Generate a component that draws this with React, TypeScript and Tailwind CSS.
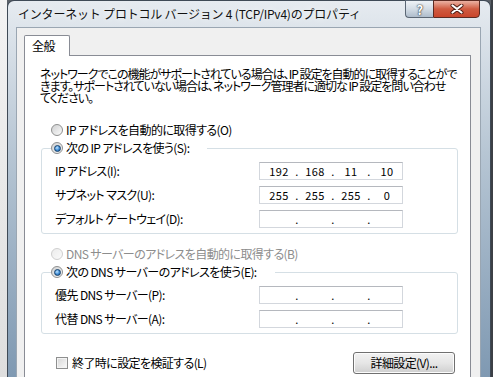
import { Fragment } from "react";

const jp = "font-['Noto_Sans_CJK_JP','Noto_Sans',sans-serif] [font-feature-settings:'palt']";

function Radio({ checked, disabled }: { checked?: boolean; disabled?: boolean }) {
  return (
    <span
      className={`flex h-[12px] w-[12px] shrink-0 items-center justify-center rounded-full border ${
        disabled
          ? "border-[#cfcfcf] bg-linear-to-br from-[#ececec] to-[#fafafa]"
          : "border-[#8e8f8f] bg-linear-to-br from-[#cfd0d1] to-[#fbfbfb]"
      }`}
    >
      {checked && (
        <span className="h-[7px] w-[7px] rounded-full border border-[#14406c] bg-[radial-gradient(circle_at_40%_35%,#bfe4ff,#3c8ad4_55%,#1c4f86)]" />
      )}
    </span>
  );
}

function IpField({ parts }: { parts?: string[] }) {
  const p = parts ?? ["", "", "", ""];
  return (
    <div className="flex h-[18px] w-[144px] items-center border border-[#d3d7dd] border-t-[#b5b8be] bg-white pl-[4px] text-[11px] leading-none tracking-[0.4px]">
      {p.map((v, i) => (
        <Fragment key={i}>
          <span className="w-[30px] text-center">{v}</span>
          {i < 3 && <span className="w-[6px] text-center">.</span>}
        </Fragment>
      ))}
    </div>
  );
}

function FieldRow({ label, parts }: { label: string; parts?: string[] }) {
  return (
    <div className="flex h-[18px] items-center">
      <span className="w-[204px] whitespace-nowrap">{label}</span>
      <IpField parts={parts} />
    </div>
  );
}

function TitleBar() {
  return (
    <div className="flex h-[26px] items-start justify-between">
      <span className="self-center whitespace-nowrap pl-[2px] text-[12px] tracking-[-0.2px] text-[#111] [font-feature-settings:normal] [text-shadow:0_0_6px_#fff]">
        インターネット プロトコル バージョン 4 (TCP/IPv4)のプロパティ
      </span>
      <div className="-mt-px mr-px flex">
        <div className="flex h-[18px] w-[28px] items-center justify-center rounded-bl-[4px] border border-r-0 border-[#5a6674] bg-linear-to-b from-[#eef2f6] via-[#d3dce5] to-[#aebccb] text-[13px] font-bold leading-none text-white [text-shadow:0_0_1px_#222,0_0_2px_#333]">
          ?
        </div>
        <div className="flex h-[18px] w-[47px] items-center justify-center rounded-br-[4px] border border-[#5c2a22] bg-linear-to-b from-[#eab1a3] via-[#cf5a40] to-[#c9452b]">
          <svg width="14" height="10" viewBox="0 0 14 10">
            <path d="M2.5 1.5 L11.5 8.5 M11.5 1.5 L2.5 8.5" stroke="#4a1a12" strokeWidth="4" strokeLinecap="round" />
            <path d="M2.5 1.5 L11.5 8.5 M11.5 1.5 L2.5 8.5" stroke="#fff" strokeWidth="2.2" strokeLinecap="round" />
          </svg>
        </div>
      </div>
    </div>
  );
}

export default function App() {
  return (
    <div className={`flex h-[377px] w-[493px] overflow-hidden bg-[#5b6168] text-[12px] tracking-[-0.6px] text-black ${jp}`}>
      {/* window behind */}
      <div className="w-[7px] shrink-0 bg-linear-to-b from-[#f3f3f3] to-[#dedede]" />

      {/* dialog window */}
      <div className="flex w-[484px] shrink-0 flex-col rounded-t-[7px] border border-b-0 border-[#3f4a56] bg-linear-to-b from-[#e6ebf0] via-[#b7c6d4] via-40% to-[#7f99b2] pl-[8px] pr-[9px]">
        <TitleBar />

        {/* client area */}
        <div className="flex flex-1 flex-col border border-b-0 border-[#9aa6b2] bg-[#f0f0f0] pl-[7px] pr-[9px] pt-[7px]">
          <div className="relative z-10 -mb-px h-[21px] w-[46px] rounded-t-[2px] border border-b-0 border-[#898c95] bg-white pl-[7px] leading-[19px]">
            全般
          </div>

          <div className="flex flex-1 flex-col border border-b-0 border-[#898c95] bg-white pl-[15px] pt-[12px]">
            <div className="whitespace-nowrap leading-[12px] tracking-[-1px]">
              <div>ネットワークでこの機能がサポートされている場合は、IP 設定を自動的に取得することがで</div>
              <div>きます。サポートされていない場合は、ネットワーク管理者に適切な IP 設定を問い合わせ</div>
              <div>てください。</div>
            </div>

            <div className="mt-[19px] flex h-[14px] items-center pl-[11px]">
              <Radio />
              <span className="ml-[3px] whitespace-nowrap">IP アドレスを自動的に取得する(O)</span>
            </div>

            <fieldset className="ml-px mt-[4px] w-[417px] rounded-[3px] border border-[#d5dfe5] pb-[5px] pl-[13px] pt-[7px]">
              <legend className="-ml-[4px] flex h-[14px] w-[156px] items-center">
                <Radio checked />
                <span className="ml-[3px] whitespace-nowrap">次の IP アドレスを使う(S):</span>
              </legend>
              <div className="flex flex-col gap-[6px]">
                <FieldRow label="IP アドレス(I):" parts={["192", "168", "11", "10"]} />
                <FieldRow label="サブネット マスク(U):" parts={["255", "255", "255", "0"]} />
                <FieldRow label="デフォルト ゲートウェイ(D):" />
              </div>
            </fieldset>

            <div className="mt-[13px] flex h-[14px] items-center pl-[11px] text-[#8d8d8d]">
              <Radio disabled />
              <span className="ml-[3px] whitespace-nowrap">DNS サーバーのアドレスを自動的に取得する(B)</span>
            </div>

            <fieldset className="ml-px mt-[4px] w-[417px] rounded-[3px] border border-[#d5dfe5] pb-[5px] pl-[13px] pt-[7px]">
              <legend className="-ml-[4px] flex h-[14px] w-[224px] items-center">
                <Radio checked />
                <span className="ml-[3px] whitespace-nowrap">次の DNS サーバーのアドレスを使う(E):</span>
              </legend>
              <div className="flex flex-col gap-[6px]">
                <FieldRow label="優先 DNS サーバー(P):" />
                <FieldRow label="代替 DNS サーバー(A):" />
              </div>
            </fieldset>

            <div className="ml-[16px] mt-[18px] flex w-[399px] items-center justify-between">
              <div className="flex items-center">
                <span className="h-[12px] w-[12px] border border-[#8e8f8f] bg-linear-to-br from-[#d6d6d6] to-[#fbfbfb] shadow-[inset_0_0_0_1px_#f4f4f4]" />
                <span className="ml-[4px] whitespace-nowrap">終了時に設定を検証する(L)</span>
              </div>
              <button className="h-[22px] w-[102px] rounded-[3px] border border-[#707070] bg-linear-to-b from-[#f2f2f2] via-[#e6e6e6] via-50% to-[#cfcfcf] text-[12px] shadow-[inset_0_0_0_1px_#fcfcfc]">
                詳細設定(V)...
              </button>
            </div>
          </div>
        </div>
      </div>

      <div className="w-[2px] shrink-0 bg-[#3c4046]" />
    </div>
  );
}
